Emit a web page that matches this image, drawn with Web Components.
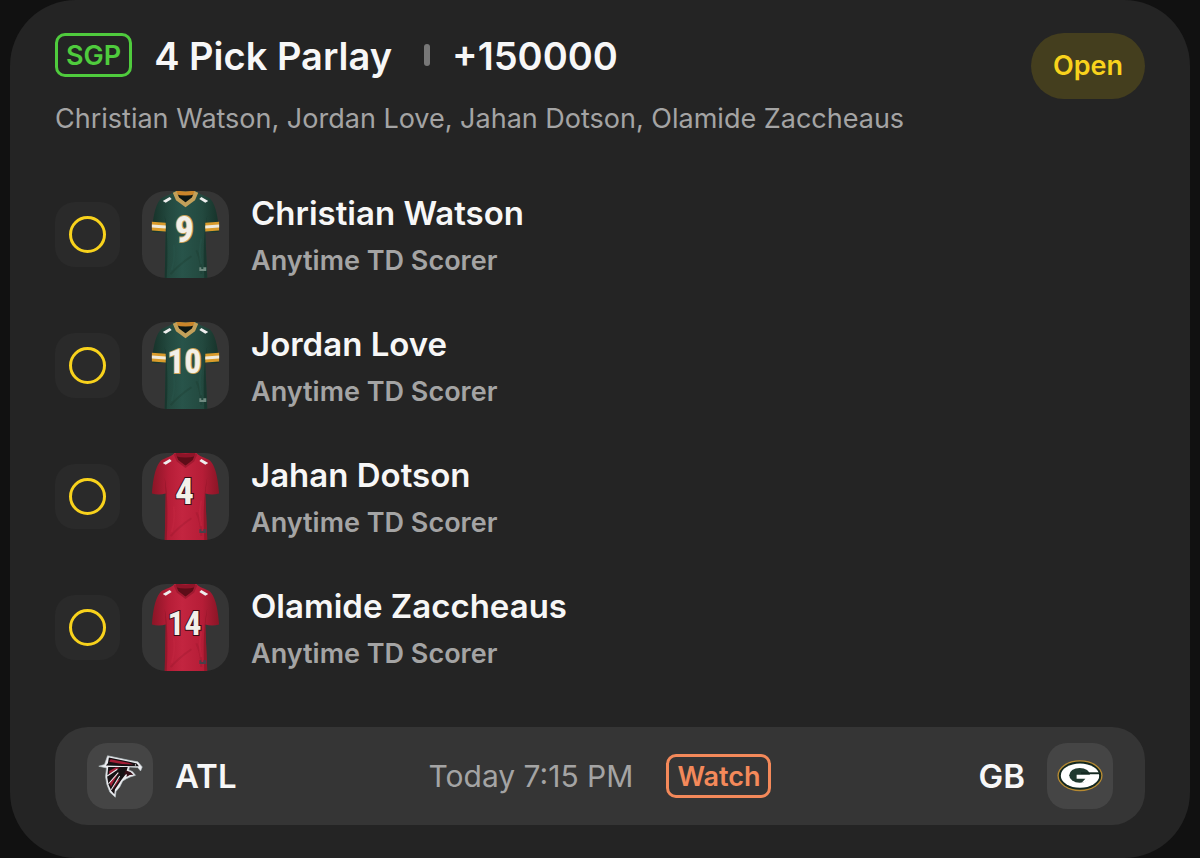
<!DOCTYPE html>
<html lang="en">
<head>
  <meta charset="UTF-8">
  <meta name="viewport" content="width=device-width, initial-scale=1">
  <title>4 Pick Parlay</title>
  <style>
    body {
      margin: 0;
      background: #111;
      color: #f7f7f7;
      font-family: Inter, "Liberation Sans", sans-serif;
    }
  </style>
</head>
<body>

<bet-card>
  <outline-tag slot="tag">SGP</outline-tag>
  <span slot="title">4 Pick Parlay</span>
  <span slot="odds">+150000</span>
  <span slot="summary">Christian Watson, Jordan Love, Jahan Dotson, Olamide Zaccheaus</span>
  <status-pill slot="status">Open</status-pill>

  <bet-leg team="gb" number="9">Christian Watson<span slot="market">Anytime TD Scorer</span></bet-leg>
  <bet-leg team="gb" number="10">Jordan Love<span slot="market">Anytime TD Scorer</span></bet-leg>
  <bet-leg team="atl" number="4">Jahan Dotson<span slot="market">Anytime TD Scorer</span></bet-leg>
  <bet-leg team="atl" number="14">Olamide Zaccheaus<span slot="market">Anytime TD Scorer</span></bet-leg>

  <game-bar slot="game">
    <span slot="away">ATL</span>
    <span slot="time">Today 7:15 PM</span>
    <span slot="action">Watch</span>
    <span slot="home">GB</span>
  </game-bar>
</bet-card>

<script>
class BetCard extends HTMLElement {
  constructor() {
    super();
    this.attachShadow({mode: 'open'});
    this.shadowRoot.innerHTML = `
      <style>
        :host {
          display: block;
          margin: 0 10px;
          padding: 33px 45px;
          border-radius: 66px;
          background: #242424;
        }
        header {
          display: flex;
          justify-content: space-between;
          align-items: flex-start;
          gap: 22px;
        }
        .line {
          display: flex;
          align-items: center;
          gap: 22px;
          min-height: 44px;
        }
        h1, .odds {
          margin: 0;
          padding-top: 2px;
          font-size: 38px;
          font-weight: 600;
          line-height: 42px;
        }
        .divider {
          width: 6px;
          height: 22px;
          margin-left: 10px;
          border-radius: 3px;
          background: #777;
        }
        .summary {
          margin: 26px 0 0;
          color: #a4a4a4;
          font-size: 27px;
          line-height: 32px;
        }
        .legs {
          display: grid;
          gap: 44px;
          margin: 56px 0;
        }
      </style>
      <article>
        <header>
          <div>
            <div class="line">
              <slot name="tag"></slot>
              <h1><slot name="title"></slot></h1>
              <div class="divider"></div>
              <div class="odds"><slot name="odds"></slot></div>
            </div>
            <p class="summary"><slot name="summary"></slot></p>
          </div>
          <slot name="status"></slot>
        </header>
        <div class="legs"><slot></slot></div>
        <slot name="game"></slot>
      </article>
    `;
  }
}

class OutlineTag extends HTMLElement {
  constructor() {
    super();
    this.attachShadow({mode: 'open'});
    this.shadowRoot.innerHTML = `
      <style>
        :host {
          display: block;
          box-sizing: border-box;
          padding: 2px 8px 0;
          border: 3px solid #4fcb3d;
          border-radius: 10px;
          color: #4fcb3d;
          font-size: 27px;
          font-weight: 600;
          line-height: 36px;
        }
      </style>
      <slot></slot>
    `;
  }
}

class StatusPill extends HTMLElement {
  constructor() {
    super();
    this.attachShadow({mode: 'open'});
    this.shadowRoot.innerHTML = `
      <style>
        :host {
          display: block;
          padding: 0 22px;
          border-radius: 33px;
          background: #443e1e;
          color: #f8d21c;
          font-size: 27px;
          font-weight: 600;
          line-height: 66px;
        }
      </style>
      <slot></slot>
    `;
  }
}

class TeamJersey extends HTMLElement {
  connectedCallback() {
    this.attachShadow({mode: 'open'});
    const number = this.getAttribute('number');
    const gb = this.getAttribute('team') === 'gb';
    const c = gb
      ? { light: '#28544a', base: '#23493f', dark: '#163229', neck: '#0d1714', collar: '#c2a05a', band: '#c9852a', edge: '#c9a35a' }
      : { light: '#c32540', base: '#b61d37', dark: '#8a1526', neck: '#5d0d18', collar: '#a01a30', band: '#8f1428', edge: '#3a0a12' };
    const stripes = gb ? `
      <path d="M10 31 24 32V41L10 40Z M64 32 78 31V40L64 41Z" fill="#d99b2b"/>
      <path d="M10 34 24 35V38L10 37Z M64 35 78 34V37L64 38Z" fill="#efeadb"/>` : '';
    this.shadowRoot.innerHTML = `
      <style>
        :host {
          display: block;
          width: 87px;
          height: 87px;
          border-radius: 24px;
          background: #353535;
          overflow: hidden;
        }
        svg { display: block; width: 100%; height: 100%; }
        text {
          font-family: "Liberation Sans Narrow", "Roboto Condensed", Roboto, sans-serif;
          font-size: ${number.length > 1 ? 34 : 38}px;
          font-weight: 700;
        }
      </style>
      <svg viewBox="0 0 88 88" role="img" aria-label="Jersey ${number}">
        <defs>
          <linearGradient id="body">
            <stop offset="0" stop-color="${c.dark}"/>
            <stop offset=".25" stop-color="${c.base}"/>
            <stop offset=".45" stop-color="${c.light}"/>
            <stop offset=".75" stop-color="${c.base}"/>
            <stop offset="1" stop-color="${c.dark}"/>
          </linearGradient>
        </defs>
        <path d="M33 0C28 5 21 5 18 9C13 15 11 28 10 41Q17 43 24 41L23 88H66L64 41Q71 43 78 41C77 28 75 15 70 9C67 5 60 5 55 0Z" fill="url(#body)"/>
        <path d="M24 41 23 25Q27 45 25 88H23Z M64 41 66 25Q61 45 63 88H66Z" fill="${c.dark}" opacity=".7"/>
        <path d="M29 84Q38 74 50 66 M60 84Q60 70 55 60" fill="none" stroke="${c.dark}" stroke-width="2" opacity=".25"/>
        <path d="M30 80Q34 67 32 54 M60 48Q57 62 60 74" fill="none" stroke="${c.light}" stroke-width="2" opacity=".5"/>
        ${stripes}
        <path d="M34 1H54L52 7 44 14 36 7Z" fill="${c.neck}"/>
        <path d="M34 1Q44 4 54 1" fill="none" stroke="${c.band}" stroke-width="4"/>
        <path d="M33 1 36 8 44 14 52 8 55 1" fill="none" stroke="${c.collar}" stroke-width="${gb ? 4 : 2}"/>
        <path d="M21 10 28 6 30 8 24 12Z M67 10 60 6 58 8 64 12Z" fill="#eee"/>
        <text x="43" y="52" text-anchor="middle" fill="#f2f0e9" stroke="${c.edge}" stroke-width="2" paint-order="stroke">${number}</text>
        <path d="M58 77H60V79H62V77H65V81H58Z" fill="${gb ? '#6f8a80' : '#49404a'}"/>
      </svg>
    `;
  }
}

class BetLeg extends HTMLElement {
  connectedCallback() {
    this.attachShadow({mode: 'open'});
    this.shadowRoot.innerHTML = `
      <style>
        :host {
          display: flex;
          align-items: center;
          gap: 22px;
        }
        .state {
          display: grid;
          place-items: center;
          width: 65px;
          height: 65px;
          border-radius: 20px;
          background: #2a2a2a;
        }
        .state svg { width: 37px; height: 37px; }
        .name {
          font-size: 33px;
          font-weight: 600;
          line-height: 40px;
        }
        .market {
          margin-top: 12px;
          color: #a4a4a4;
          font-size: 27px;
          font-weight: 600;
          line-height: 32px;
        }
      </style>
      <div class="state">
        <svg viewBox="0 0 37 37" role="img" aria-label="Pending">
          <circle cx="18.5" cy="18.5" r="17" fill="none" stroke="#f8d21c" stroke-width="3"/>
        </svg>
      </div>
      <team-jersey team="${this.getAttribute('team')}" number="${this.getAttribute('number')}"></team-jersey>
      <div>
        <div class="name"><slot></slot></div>
        <div class="market"><slot name="market"></slot></div>
      </div>
    `;
  }
}

const LOGOS = {
  atl: `
    <path d="M57 95 74 90 83 64 150 78 173 82 186 97 181 109 173 99 148 97 146 106 157 111 166 122 150 127 139 132 128 139 119 157 108 170 106 187 90 172 81 149 77 126 80 100Z" fill="#ececf0" stroke="#b8c4c7" stroke-width="2"/>
    <path d="M87 69 148 82 170 87 176 95 126 94 78 93 84 86Z" fill="#151214"/>
    <path d="M92 74 145 85 160 90 126 88 88 82Z" fill="#a31d35"/>
    <path d="M85 97H143L136 120 124 136 105 164 103 178 94 168 86 150 82 127Z" fill="#171214"/>
    <path d="M88 109 107 99H119L88 120Z M89 142 116 113 93 156Z M97 166 112 136 120 134Z" fill="#a31d35"/>
    <path d="M82 124 112 104 M86 147 115 114 M94 165 119 124" fill="none" stroke="#ececf0" stroke-width="3"/>
    <path d="M136 107 151 112 160 120 149 121 139 127 141 119 132 120Z" fill="#351018"/>
    <circle cx="166" cy="91" r="2" fill="#fff"/>`,
  gb: `
    <ellipse cx="120" cy="123" rx="67" ry="46" fill="#b78a32"/>
    <ellipse cx="120" cy="123" rx="63" ry="42" fill="#142820"/>
    <ellipse cx="120" cy="123" rx="57" ry="36" fill="#fff"/>
    <ellipse cx="119" cy="122" rx="31" ry="22" fill="#20392f"/>
    <path d="M123 113H180V119H123Z" fill="#142820"/>
    <path d="M110 120H176V131H149Q143 143 125 144L136 132H110Z" fill="#fff"/>`
};

class TeamLogo extends HTMLElement {
  connectedCallback() {
    this.attachShadow({mode: 'open'});
    const team = this.getAttribute('team');
    this.shadowRoot.innerHTML = `
      <style>
        :host {
          display: block;
          width: 66px;
          height: 66px;
          border-radius: 20px;
          background: #454545;
        }
        svg { display: block; width: 100%; height: 100%; }
      </style>
      <svg viewBox="22 26 196 196" role="img" aria-label="${team.toUpperCase()} logo">${LOGOS[team]}</svg>
    `;
  }
}

class GameBar extends HTMLElement {
  constructor() {
    super();
    this.attachShadow({mode: 'open'});
    this.shadowRoot.innerHTML = `
      <style>
        :host {
          display: grid;
          grid-template-columns: 1fr auto 1fr;
          align-items: center;
          padding: 16px 32px;
          border-radius: 33px;
          background: #353535;
        }
        .team, .info {
          display: flex;
          align-items: center;
          gap: 22px;
          font-size: 33px;
          font-weight: 600;
          line-height: 40px;
        }
        .home { justify-content: flex-end; }
        .info { gap: 33px; }
        .time {
          color: #a4a4a4;
          font-size: 30px;
          font-weight: 400;
        }
        button {
          margin: 0;
          padding: 2px 8px 0;
          border: 3px solid #f4895a;
          border-radius: 10px;
          background: none;
          color: #f4895a;
          font: 600 27px/36px Inter, "Liberation Sans", sans-serif;
          cursor: pointer;
        }
      </style>
      <div class="team">
        <team-logo team="atl"></team-logo>
        <slot name="away"></slot>
      </div>
      <div class="info">
        <span class="time"><slot name="time"></slot></span>
        <button type="button"><slot name="action"></slot></button>
      </div>
      <div class="team home">
        <slot name="home"></slot>
        <team-logo team="gb"></team-logo>
      </div>
    `;
  }
}

customElements.define('bet-card', BetCard);
customElements.define('outline-tag', OutlineTag);
customElements.define('status-pill', StatusPill);
customElements.define('team-jersey', TeamJersey);
customElements.define('bet-leg', BetLeg);
customElements.define('team-logo', TeamLogo);
customElements.define('game-bar', GameBar);
</script>
</body>
</html>
